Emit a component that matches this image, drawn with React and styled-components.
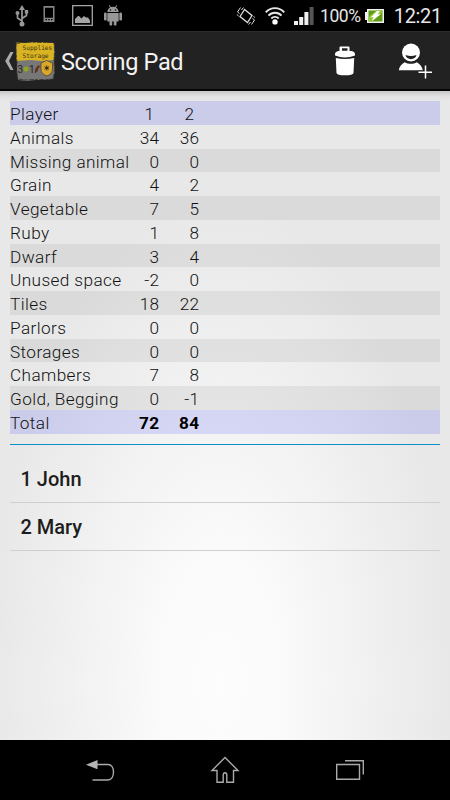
import React from 'react';
import styled, { createGlobalStyle } from 'styled-components';

const GlobalStyle = createGlobalStyle`
  * {
    box-sizing: border-box;
  }

  body {
    margin: 0;
    background-color: #000;
    font-family: Roboto, 'Liberation Sans', sans-serif;
  }

  svg {
    display: block;
    flex-shrink: 0;
  }
`;

const StyledWrapper = styled.div`
  width: 450px;
  height: 800px;
  display: flex;
  flex-direction: column;
  overflow: hidden;
`;

const StyledStatusBar = styled.div`
  height: 31px;
  display: flex;
  align-items: center;
  padding: 0 8px 0 15px;
  background-color: #000;
  color: #e6e6e6;
`;

const StyledStatusIcon = styled.div`
  margin-left: ${({ $gap }) => $gap || 0}px;
`;

const StyledSpacer = styled.div`
  flex: 1;
`;

const StyledBattery = styled.span`
  width: 41px;
  margin-left: 6px;
  padding-top: 2px;
  font-size: 17.5px;
  line-height: 31px;
  letter-spacing: -0.4px;
  white-space: nowrap;
`;

const StyledClock = styled.span`
  width: 49px;
  margin-left: 9px;
  padding-top: 2px;
  font-size: 20px;
  line-height: 31px;
  letter-spacing: -0.3px;
  text-align: right;
  white-space: nowrap;
`;

const StyledActionBar = styled.header`
  height: 60px;
  display: flex;
  align-items: center;
  padding: 0 17px 0 5px;
  background-color: #222;
  border-top: 1px solid #2d2b2c;
  border-bottom: 2px solid #050505;
`;

const StyledTitle = styled.h1`
  margin: 0 0 0 5px;
  padding-top: 3px;
  color: #f3f3f3;
  font-size: 23.5px;
  font-weight: 400;
  line-height: 55px;
  letter-spacing: -0.35px;
`;

const StyledAction = styled.div`
  margin-left: ${({ $gap }) => $gap || 0}px;
`;

const StyledContent = styled.main`
  height: 649px;
  padding: 10px 10px 0;
  background: linear-gradient(rgba(0, 0, 0, 0.14), rgba(0, 0, 0, 0.03) 5px, transparent 10px),
    radial-gradient(ellipse 230px 480px at 220px 590px, #fdfdfd 0%, #fafafa 28%, #f2f2f2 60%, #e8e8e8 100%);
`;

const StyledRow = styled.div`
  height: 23.75px;
  display: grid;
  grid-template-columns: 109.5px 40px 40px;
  align-items: center;
  padding-top: 2px;
  background-color: ${({ $tone }) =>
    ({ accent: 'rgba(0, 0, 255, 0.12)', odd: 'rgba(0, 0, 0, 0.06)' })[$tone] || 'transparent'};
  color: #111;
  font-size: 17.2px;
  font-weight: 300;
  line-height: 22px;
  letter-spacing: 0.4px;
  white-space: nowrap;
`;

const StyledScore = styled.span`
  padding-right: ${({ $heading }) => ($heading ? 5 : 0)}px;
  font-weight: ${({ $bold }) => ($bold ? 700 : 'inherit')};
  color: ${({ $bold }) => ($bold ? '#000' : 'inherit')};
  text-align: right;
`;

const StyledPlayers = styled.ul`
  margin: 10px 0 0;
  padding: 10px 0 0;
  border-top: 1px solid #0c91c6;
  list-style: none;
`;

const StyledPlayer = styled.li`
  height: 48px;
  padding-left: 10.5px;
  border-bottom: 1px solid #cfcfcf;
  color: #1d1d1d;
  font-size: 20px;
  font-weight: 500;
  line-height: 48px;
`;

const StyledNavBar = styled.nav`
  height: 60px;
  display: flex;
  align-items: center;
  justify-content: space-between;
  padding: 0 85px;
  background-color: #000;
`;

const rows = [
  { label: 'Player', scores: ['1', '2'], tone: 'accent', heading: true },
  { label: 'Animals', scores: ['34', '36'] },
  { label: 'Missing animal', scores: ['0', '0'], tone: 'odd' },
  { label: 'Grain', scores: ['4', '2'] },
  { label: 'Vegetable', scores: ['7', '5'], tone: 'odd' },
  { label: 'Ruby', scores: ['1', '8'] },
  { label: 'Dwarf', scores: ['3', '4'], tone: 'odd' },
  { label: 'Unused space', scores: ['-2', '0'] },
  { label: 'Tiles', scores: ['18', '22'], tone: 'odd' },
  { label: 'Parlors', scores: ['0', '0'] },
  { label: 'Storages', scores: ['0', '0'], tone: 'odd' },
  { label: 'Chambers', scores: ['7', '8'] },
  { label: 'Gold, Begging', scores: ['0', '-1'], tone: 'odd' },
  { label: 'Total', scores: ['72', '84'], tone: 'accent', bold: true },
];

const players = ['1 John', '2 Mary'];

const UsbIcon = () => (
  <svg width="14" height="22" viewBox="0 0 14 22" fill="none" stroke="#989898" strokeWidth="1.7">
    <path d="M7 4v14M7 16L2.500 13V8M7 13.500l4.500-3V7" />
    <path d="M7 0l3 5H4z" fill="#989898" stroke="none" />
    <circle cx="7" cy="19" r="2.500" fill="#989898" stroke="none" />
    <circle cx="2.500" cy="8" r="2" fill="#989898" stroke="none" />
    <path d="M9.800 5h3.400v3.600H9.800z" fill="#989898" stroke="none" />
  </svg>
);

const PhoneIcon = () => (
  <svg width="12" height="19" viewBox="0 0 12 19">
    <path fillRule="evenodd" fill="#858585" d="M.5 0h11v16H.5zM2 1.800v10h8v-10zM2.500 13h1.500v1.300H2.500zM5.200 13h1.500v1.300H5.200zM8 13h1.500v1.300H8z" />
  </svg>
);

const PictureIcon = () => (
  <svg width="21" height="21" viewBox="0 0 21 21">
    <path fill="none" stroke="#a5a5a5" strokeWidth="1.300" d="M.7.7h19.600v19.600H.7z" />
    <path fill="#a5a5a5" d="M3 18v-4l3-3h1l2.500 2.500L12 11l2 1.500h2l2 3V18z" />
  </svg>
);

const AndroidIcon = () => (
  <svg width="20" height="21" viewBox="0 0 20 21" fill="#989898">
    <path d="M4.300 7C4.600 4.700 5.600 3.300 7 2.400L5.800.5l.7-.4 1.300 2a7 7 0 0 1 4.400 0l1.300-2 .7.4L13 2.400c1.400.9 2.400 2.300 2.700 4.600z" />
    <rect x="1" y="7.500" width="2.700" height="8" rx="1.200" />
    <rect x="16.300" y="7.500" width="2.700" height="8" rx="1.200" />
    <path d="M4.300 8h11.400v8.500H13.500V20q-1.250 1.200-2.700 0v-3.500H9.200V20q-1.250 1.200-2.700 0v-3.500H4.300z" />
    <circle cx="7.500" cy="5" r=".7" fill="#000" />
    <circle cx="12.500" cy="5" r=".7" fill="#000" />
  </svg>
);

const VibrateIcon = () => (
  <svg width="20" height="20" viewBox="0 0 20 20" fill="none" stroke="#ddd" strokeWidth="1.300">
    <path d="M8.500 3.500L4 10.500l7.500 6L16 9.500z" />
    <path d="M3.500 7.500L1.500 6 4.500 1.500M2.500 10L.8 8.500M5.500 4l2-2.500M16.500 12.500l2 1.500-3 4.500M14.500 16l-2 2.500M17.500 10.500l1.500 1" strokeWidth="1" />
  </svg>
);

const WifiIcon = () => (
  <svg width="20" height="18" viewBox="0 0 20 18" fill="none" stroke="#e6e6e6" strokeWidth="1.900">
    <path d="M.8 5.400C5.500-.3 14.500-.3 19.200 5.400M3.500 8.700c3.400-4 9.600-4 13 0M6.300 11.500c2-2.200 5.400-2.200 7.400 0" />
    <circle cx="10" cy="14.900" r="2.700" fill="#fff" stroke="none" />
  </svg>
);

const SignalIcon = () => (
  <svg width="20" height="18" viewBox="0 0 20 18" fill="#efefef">
    <path d="M0 14h4v4H0zM5.200 10h4v8h-4zM10.400 5h4v13h-4z" />
    <path fill="#555" d="M15.600 0h4v18h-4z" />
  </svg>
);

const BatteryIcon = () => (
  <svg width="19" height="14" viewBox="0 0 19 14">
    <path fill="#f2f2f2" d="M2 0h17v14H2v-3H0V3h2z" />
    <path fill="#5f9a16" d="M3.500 1.500h14v11h-14z" />
    <path fill="#8fc73a" d="M3.500 8l8-6.500h6v2L7 12.500H3.500z" />
    <path fill="#fff" d="M12 2L5.500 8.500l3-.5L7 12l9-7-3.500.5L15 2z" />
  </svg>
);

const BackChevron = () => (
  <svg width="9" height="20" viewBox="0 0 9 20">
    <path fill="#aaa" d="M5.400 1H8.500L4 10l4.500 9H5.400L.2 10z" />
  </svg>
);

// Room tile used as the launcher icon
const StorageTile = () => (
  <svg width="42" height="40" viewBox="0 0 42 40">
    <path fill="#777" d="M2 2l9 0 10-1 9 1 10 0 1 8-1 11 1 9-2 8-9 1-8 0-9 1-9-1-1-9 0-9-1-10z" />
    <path fill="#d9b321" d="M2.500 1.500l8.500 .5 12-1 17 1v17l-12 1-12-1-13.500 1z" />
    <path
      fill="none"
      stroke="#34322a"
      strokeWidth=".8"
      strokeDasharray="5 1.500 3 1"
      d="M2 3l5-1.500 9-.5 8 .5 16 0 .5 8.500-.5 9 .5 10-1 9-8 .5-10 0-10 .5-8-1-1-8 .5-9-1-9z"
    />
    <g fill="#3f3615" fontFamily="DejaVu Sans Mono, monospace" fontSize="6.200">
      <text x="8.500" y="9">Supplies</text>
      <text x="8.500" y="16.800">Storage</text>
    </g>
    <g fill="#25251f" fontFamily="Roboto, sans-serif" fontSize="10">
      <text x="3.500" y="31.500">3</text>
      <text x="15" y="31.500">1</text>
    </g>
    <circle cx="12" cy="28" r="2.600" fill="#91a51e" />
    <path fill="#68301b" d="M20.500 32l1-4.500 3-3.500 1.500 1.500-2 2.500 0 1.500-2.500 2.500z" />
    <path fill="#d9a72e" stroke="#4a3b18" strokeWidth=".7" d="M27 22l5.500-2.500 6 2.500v6c0 4-3 6-5.500 7-3-1-6-3-6-7z" />
    <path stroke="#332a12" strokeWidth="1" d="M32.800 24.500v5M30.500 25.700l4.500 2.600M35 25.700l-4.500 2.600" />
  </svg>
);

const TrashIcon = () => (
  <svg width="22" height="30" viewBox="0 0 22 30" fill="#fff">
    <path fillRule="evenodd" d="M5.500 5V1.200Q5.500.5 6.500.5h8q1 0 1 .7V5h2Q21 6 21 8v1.500Q16 11.500 11 11.500T1 9.500V8q0-2 3.500-3zM8 2.300V4.800h5.500V2.300z" />
    <path d="M1.800 11.900q9.200 2.300 18.400 0l-.7 15Q19 29.300 11 29.300t-8.500-2.400z" />
  </svg>
);

const AddPlayerIcon = () => (
  <svg width="35" height="36" viewBox="0 0 35 36">
    <circle cx="13" cy="9.500" r="9" fill="#fff" />
    <path fill="#222" d="M7.500 12q5.500 2 11 0c-.8 5.500-10.200 5.500-11 0z" />
    <path fill="#fff" d="M.8 27.300c.7-4 2.700-6.300 6-8 3.500 2 8.500 2 12 0 3.200 1.700 5 4 6 8z" />
    <path stroke="#222" strokeWidth="3.500" d="M27.500 22.500v12M21 29.300h13" />
    <path stroke="#fff" strokeWidth="1.500" d="M27.500 22.500v13M20.500 29.300h13.500" />
  </svg>
);

const NavBackIcon = () => (
  <svg width="30" height="24" viewBox="0 0 30 24">
    <path fill="none" stroke="#aaa" strokeWidth="1.400" d="M12 6.500h11c3.500 0 5.500 3.200 5.500 7.500s-2 8-5.500 8H7.500" />
    <path fill="#b5b5b5" d="M1 6.800L12.500 2v9.300z" />
  </svg>
);

const NavHomeIcon = () => (
  <svg width="30" height="28" viewBox="0 0 30 28" fill="none" stroke="#aaa" strokeWidth="1.400">
    <path d="M15 1.500l13 13h-4.500v11.800h-6.700V19c0-3-3.600-3-3.600 0v7.300H7V14.500H2z" />
  </svg>
);

const NavRecentIcon = () => (
  <svg width="30" height="20" viewBox="0 0 30 20" fill="none" stroke="#aaa" strokeWidth="1.400">
    <path d="M1.700 4.500h22.800v14.700H1.700zM10 .8h18.300V14.500" />
  </svg>
);

const App = () => (
  <>
    <GlobalStyle />
    <StyledWrapper>
      <StyledStatusBar>
        <StyledStatusIcon>
          <UsbIcon />
        </StyledStatusIcon>
        <StyledStatusIcon $gap={14}>
          <PhoneIcon />
        </StyledStatusIcon>
        <StyledStatusIcon $gap={17}>
          <PictureIcon />
        </StyledStatusIcon>
        <StyledStatusIcon $gap={10}>
          <AndroidIcon />
        </StyledStatusIcon>
        <StyledSpacer />
        <VibrateIcon />
        <StyledStatusIcon $gap={9}>
          <WifiIcon />
        </StyledStatusIcon>
        <StyledStatusIcon $gap={9}>
          <SignalIcon />
        </StyledStatusIcon>
        <StyledBattery>100%</StyledBattery>
        <StyledStatusIcon $gap={4}>
          <BatteryIcon />
        </StyledStatusIcon>
        <StyledClock>12:21</StyledClock>
      </StyledStatusBar>
      <StyledActionBar>
        <BackChevron />
        <StorageTile />
        <StyledTitle>Scoring Pad</StyledTitle>
        <StyledSpacer />
        <TrashIcon />
        <StyledAction $gap={42}>
          <AddPlayerIcon />
        </StyledAction>
      </StyledActionBar>
      <StyledContent>
        {rows.map(({ label, scores, tone, heading, bold }) => (
          <StyledRow key={label} $tone={tone}>
            <span>{label}</span>
            {scores.map((score, index) => (
              <StyledScore key={index} $heading={heading} $bold={bold}>
                {score}
              </StyledScore>
            ))}
          </StyledRow>
        ))}
        <StyledPlayers>
          {players.map(player => (
            <StyledPlayer key={player}>{player}</StyledPlayer>
          ))}
        </StyledPlayers>
      </StyledContent>
      <StyledNavBar>
        <NavBackIcon />
        <NavHomeIcon />
        <NavRecentIcon />
      </StyledNavBar>
    </StyledWrapper>
  </>
);

export default App;
